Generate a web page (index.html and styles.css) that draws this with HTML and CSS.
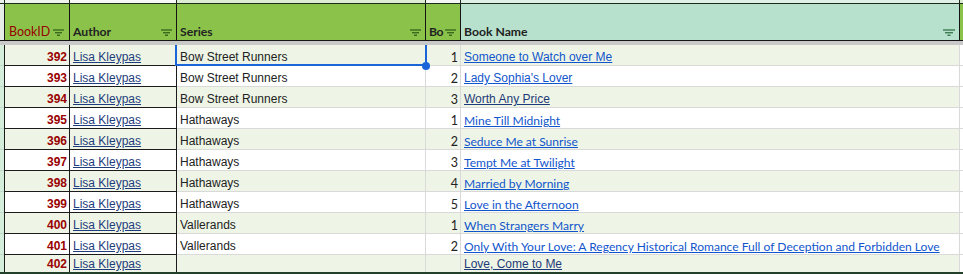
FILE: index.html
```html
<!DOCTYPE html>
<html>
<head>
<meta charset="utf-8">
<title>Books</title>
<link rel="stylesheet" href="styles.css">
</head>
<body>
<div class="sheet">
  <div class="row top">
    <div class="c strip"></div><div class="c id"></div><div class="c au"></div><div class="c se"></div><div class="c bo"></div><div class="c bn"></div><div class="c rest"></div>
  </div>
  <div class="row head">
    <div class="c strip"></div>
    <div class="c id"><span class="lbl red">BookID</span><svg class="flt" width="11" height="7" viewBox="0 0 11 7"><rect x="0" y="0.3" width="11" height="1.4"/><rect x="2" y="3" width="7" height="1.4"/><rect x="4" y="5.5" width="3" height="1.5"/></svg></div>
    <div class="c au"><span class="lbl">Author</span><svg class="flt" width="11" height="7" viewBox="0 0 11 7"><rect x="0" y="0.3" width="11" height="1.4"/><rect x="2" y="3" width="7" height="1.4"/><rect x="4" y="5.5" width="3" height="1.5"/></svg></div>
    <div class="c se"><span class="lbl">Series</span><svg class="flt" width="11" height="7" viewBox="0 0 11 7"><rect x="0" y="0.3" width="11" height="1.4"/><rect x="2" y="3" width="7" height="1.4"/><rect x="4" y="5.5" width="3" height="1.5"/></svg></div>
    <div class="c bo"><span class="lbl tight">Bo</span><svg class="flt" width="11" height="7" viewBox="0 0 11 7"><rect x="0" y="0.3" width="11" height="1.4"/><rect x="2" y="3" width="7" height="1.4"/><rect x="4" y="5.5" width="3" height="1.5"/></svg></div>
    <div class="c bn"><span class="lbl">Book Name</span><svg class="flt" width="12" height="7" viewBox="0 0 12 7"><rect x="0" y="0.3" width="12" height="1.4"/><rect x="2" y="3" width="8" height="1.4"/><rect x="4.5" y="5.5" width="3" height="1.5"/></svg></div>
    <div class="c rest"></div>
  </div>
  <div class="freeze"></div>

  <div class="row body alt">
    <div class="c strip"></div><div class="c id">392</div><div class="c au"><a class="auth">Lisa Kleypas</a></div><div class="c se">Bow Street Runners</div><div class="c bo">1</div><div class="c bn"><a class="lnk">Someone to Watch over Me</a></div><div class="c rest"></div>
  </div>
  <div class="row body">
    <div class="c strip"></div><div class="c id">393</div><div class="c au"><a class="auth">Lisa Kleypas</a></div><div class="c se">Bow Street Runners</div><div class="c bo">2</div><div class="c bn"><a class="lnk">Lady Sophia's Lover</a></div><div class="c rest"></div>
  </div>
  <div class="row body alt">
    <div class="c strip"></div><div class="c id">394</div><div class="c au"><a class="auth">Lisa Kleypas</a></div><div class="c se">Bow Street Runners</div><div class="c bo">3</div><div class="c bn"><a class="lnk vis">Worth Any Price</a></div><div class="c rest"></div>
  </div>
  <div class="row body">
    <div class="c strip"></div><div class="c id">395</div><div class="c au"><a class="auth">Lisa Kleypas</a></div><div class="c se">Hathaways</div><div class="c bo">1</div><div class="c bn"><a class="lnk cal">Mine Till Midnight</a></div><div class="c rest"></div>
  </div>
  <div class="row body alt">
    <div class="c strip"></div><div class="c id">396</div><div class="c au"><a class="auth">Lisa Kleypas</a></div><div class="c se">Hathaways</div><div class="c bo">2</div><div class="c bn"><a class="lnk cal">Seduce Me at Sunrise</a></div><div class="c rest"></div>
  </div>
  <div class="row body">
    <div class="c strip"></div><div class="c id">397</div><div class="c au"><a class="auth">Lisa Kleypas</a></div><div class="c se">Hathaways</div><div class="c bo">3</div><div class="c bn"><a class="lnk cal">Tempt Me at Twilight</a></div><div class="c rest"></div>
  </div>
  <div class="row body alt">
    <div class="c strip"></div><div class="c id">398</div><div class="c au"><a class="auth">Lisa Kleypas</a></div><div class="c se">Hathaways</div><div class="c bo">4</div><div class="c bn"><a class="lnk cal">Married by Morning</a></div><div class="c rest"></div>
  </div>
  <div class="row body">
    <div class="c strip"></div><div class="c id">399</div><div class="c au"><a class="auth">Lisa Kleypas</a></div><div class="c se">Hathaways</div><div class="c bo">5</div><div class="c bn"><a class="lnk cal">Love in the Afternoon</a></div><div class="c rest"></div>
  </div>
  <div class="row body alt">
    <div class="c strip"></div><div class="c id">400</div><div class="c au"><a class="auth">Lisa Kleypas</a></div><div class="c se">Vallerands</div><div class="c bo">1</div><div class="c bn"><a class="lnk cal">When Strangers Marry</a></div><div class="c rest"></div>
  </div>
  <div class="row body">
    <div class="c strip"></div><div class="c id">401</div><div class="c au"><a class="auth">Lisa Kleypas</a></div><div class="c se">Vallerands</div><div class="c bo">2</div><div class="c bn"><a class="lnk cal">Only With Your Love: A Regency Historical Romance Full of Deception and Forbidden Love</a></div><div class="c rest"></div>
  </div>
  <div class="row body alt last">
    <div class="c strip"></div><div class="c id">402</div><div class="c au"><a class="auth">Lisa Kleypas</a></div><div class="c se"></div><div class="c bo"></div><div class="c bn"><a class="lnk vis">Love, Come to Me</a></div><div class="c rest"></div>
  </div>

  <div class="selection"></div>
  <div class="handle"></div>
</div>
</body>
</html>
```
FILE: styles.css
```css
* { box-sizing: border-box; margin: 0; padding: 0; }
html, body { background: #ffffff; }
body {
  width: 963px;
  height: 274px;
  overflow: hidden;
  font-family: "Liberation Sans", Arial, sans-serif;
  font-size: 12px;
  color: #222222;
}
.sheet {
  position: relative;
  display: flex;
  flex-direction: column;
  width: 963px;
}
.row {
  display: grid;
  grid-template-columns: 4px 66px 107px 249px 35px 499px 3px;
}
.c { min-width: 0; white-space: nowrap; }

/* strip of the row above the header */
.top { height: 3px; }
.top .c { border-right: 1px solid #1d2a1d; }
.top .strip { background: #e9f0e9; border-right: none; }
.top .id { background: #eef4ec; border-left: 1px solid #1d2a1d; }
.top .au { background: #f5f8f4; }
.top .se { background: #dcebd2; }
.top .bo { background: #f3f6f2; }
.top .bn { background: #dff0e6; }
.top .rest { background: #dcebd2; border-right: none; }

/* header */
.head {
  height: 38px;
  border-top: 1px solid #1b2b1b;
  border-bottom: 1px solid #141414;
  font-family: Lato, "Liberation Sans", sans-serif;
  font-weight: 700;
  font-size: 12.2px;
  color: #222222;
}
.head .c {
  display: flex;
  align-items: flex-end;
  justify-content: space-between;
  padding: 0 4px 0 3px;
  line-height: 17px;
  background: #8bc34a;
  border-right: 1px solid #141414;
}
.head .strip { background: #e6ece6; border-right: none; padding: 0; }
.head .id { border-left: 1px solid #141414; padding-left: 4px; padding-right: 5px; }
.head .bo { padding-right: 4px; }
.head .bn { background: #b7e1cd; }
.head .rest { background: #8bc34a; border-right: none; padding: 0; }
.lbl { display: block; }
.lbl.red { color: #990000; font-weight: 400; font-size: 12.4px; }
.lbl.tight { letter-spacing: -0.4px; }
.flt { display: block; flex: none; margin-bottom: 4px; fill: #3b6a1e; }
.head .bn .flt { fill: #3d7c52; }

/* frozen divider */
.freeze { height: 4px; background: #c9c9c9; }

/* body */
.body { height: 21px; }
.body .c {
  display: flex;
  align-items: flex-end;
  padding: 0 3px;
  line-height: 15px;
  background: #ffffff;
  border-right: 1px solid #d9d9d9;
  border-bottom: 1px solid #d9d9d9;
}
.body.alt .c { background: #eef5e6; }
.body .strip, .body.alt .strip {
  background: #d5eedc;
  border-right: none;
  border-bottom-color: #c3d8c8;
  padding: 0;
}
.body .rest, .body.alt .rest { background: #ffffff; border-right: none; padding: 0; }
.body .id {
  justify-content: flex-end;
  padding-right: 2px;
  color: #990000;
  font-weight: 700;
  border-left: 1px solid #1b1b1b;
  border-right-color: #1b1b1b;
  border-bottom-color: #1b1b1b;
}
.body .au { border-right-color: #1b1b1b; border-bottom-color: #1b1b1b; }
.body .bo {
  justify-content: flex-end;
  padding-right: 2px;
  font-family: Lato, "Liberation Sans", sans-serif;
  font-size: 12.5px;
}

.body.last { height: 19px; border-bottom: 2px solid #22402a; }
.body.last .c { border-bottom: none; }

a { text-decoration: underline; cursor: pointer; }
.auth { color: #1f3d7d; }
.lnk { color: #1155cc; }
.lnk.vis { color: #1e3a78; }
.cal { font-family: Lato, "Liberation Sans", sans-serif; font-size: 12.05px; }

/* active cell selection, drawn over the grid */
.selection {
  position: absolute;
  left: 175px;
  top: 45px;
  width: 252px;
  height: 21px;
  border: 2px solid #1a66d9;
  border-top: none;
  pointer-events: none;
}
.handle {
  position: absolute;
  left: 422px;
  top: 62px;
  width: 8px;
  height: 8px;
  border-radius: 50%;
  background: #1a66d9;
}
```
